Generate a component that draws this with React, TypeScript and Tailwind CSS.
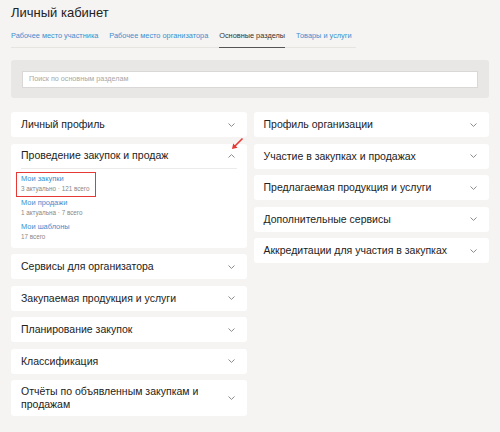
import React from "react";

const tabs = [
  { label: "Рабочее место участника", active: false },
  { label: "Рабочее место организатора", active: false },
  { label: "Основные разделы", active: true },
  { label: "Товары и услуги", active: false },
];

const leftRest = [
  "Сервисы для организатора",
  "Закупаемая продукция и услуги",
  "Планирование закупок",
  "Классификация",
  "Отчёты по объявленным закупкам и продажам",
];

const rightCards = [
  "Профиль организации",
  "Участие в закупках и продажах",
  "Предлагаемая продукция и услуги",
  "Дополнительные сервисы",
  "Аккредитации для участия в закупках",
];

const links = [
  { title: "Мои закупки", sub: "3 актуально · 121 всего" },
  { title: "Мои продажи", sub: "1 актуальна · 7 всего" },
  { title: "Мои шаблоны", sub: "17 всего" },
];

function Chevron({ up = false }: { up?: boolean }) {
  return (
    <svg width="7" height="4" viewBox="0 0 7 4" className="shrink-0">
      <path
        d={up ? "M0.5 3.5 L3.5 0.6 L6.5 3.5" : "M0.5 0.5 L3.5 3.4 L6.5 0.5"}
        fill="none"
        stroke="#8a8a8a"
        strokeWidth="1"
      />
    </svg>
  );
}

function Card({ title }: { title: string }) {
  return (
    <div className="bg-white rounded-[3px] min-h-[25px] flex items-center justify-between pl-[10px] pr-[12px] py-[5px]">
      <span className="text-[10.5px] leading-[13px] text-[#222] pr-3">{title}</span>
      <Chevron />
    </div>
  );
}

export default function App() {
  return (
    <div
      className="w-[500px] h-[432px] bg-[#f5f4f2] px-[11px] pt-[3px] overflow-hidden"
      style={{ fontFamily: '"Liberation Sans", Arial, sans-serif' }}
    >
      <h1 className="text-[13px] leading-[20px] text-[#222]">Личный кабинет</h1>

      {/* вкладки */}
      <div className="mt-[7px] flex gap-[11px] border-b border-[#e6e4e1] w-fit pr-1">
        {tabs.map((t) => (
          <span
            key={t.label}
            className={`text-[7.35px] leading-[10px] pt-[1px] pb-[6px] ${
              t.active
                ? "text-[#333] border-b-[1.5px] border-[#555] -mb-px"
                : "text-[#3a8fd0]"
            }`}
          >
            {t.label}
          </span>
        ))}
      </div>

      {/* поиск */}
      <div className="mt-[12px] bg-[#e8e7e6] rounded-[3px] h-[38px] px-[11px] flex items-center">
        <div className="w-full h-[17px] bg-white border border-[#d9d8d6] flex items-center px-[6px]">
          <span className="text-[7.2px] text-[#a8a8a8]">Поиск по основным разделам</span>
        </div>
      </div>

      <div className="mt-[14px] grid grid-cols-2 gap-x-[7px] items-start">
        <div className="flex flex-col gap-[6.5px]">
          <Card title="Личный профиль" />

          <div className="relative bg-white rounded-[3px] px-[10px] pb-[4px]">
            <div className="h-[25px] flex items-center justify-between pr-[2px] border-b border-[#ebebeb]">
              <span className="text-[10.5px] text-[#222]">Проведение закупок и продаж</span>
              <Chevron up />
            </div>
            <div className="pt-[3px] flex flex-col">
              {links.map((l) => (
                <div key={l.title} className="h-[24px] flex flex-col justify-center">
                  <span className="text-[7.45px] leading-[10px] text-[#3a8fd0]">{l.title}</span>
                  <span className="text-[6.3px] leading-[10px] text-[#888]">{l.sub}</span>
                </div>
              ))}
            </div>
            {/* пометка */}
            <div className="absolute left-[5px] top-[28px] w-[80px] h-[25px] border-[1.5px] border-[#e53935]" />
            <svg
              className="absolute left-[218px] top-[-7px]"
              width="16"
              height="16"
              viewBox="0 0 16 16"
            >
              <path d="M13.5 1.5 L6 9" stroke="#e53935" strokeWidth="1.6" fill="none" />
              <path d="M3 12 L4.2 6.5 L8.5 10.8 Z" fill="#e53935" />
            </svg>
          </div>

          {leftRest.map((t) => (
            <Card key={t} title={t} />
          ))}
        </div>

        <div className="flex flex-col gap-[6.5px]">
          {rightCards.map((t) => (
            <Card key={t} title={t} />
          ))}
        </div>
      </div>
    </div>
  );
}
